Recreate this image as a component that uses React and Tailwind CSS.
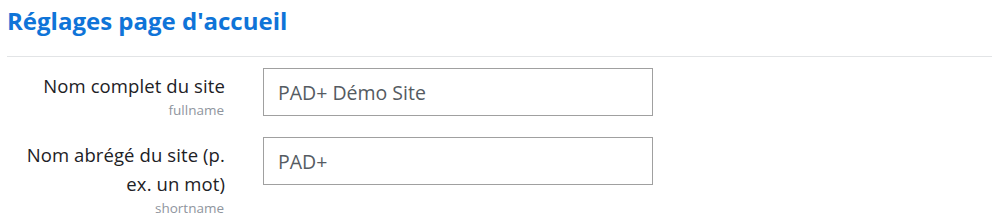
import React, { useState } from 'react'

const fields = [
  { label: "Nom complet du site", name: "fullname" },
  { label: "Nom abrégé du site (p. ex. un mot)", name: "shortname" },
]

const App = () => {
  const [values, setValues] = useState({
    fullname: "PAD+ Démo Site",
    shortname: "PAD+",
  })

  const handleChange = (e) => {
    const { name, value } = e.target
    setValues((prev) => ({ ...prev, [name]: value }))
  }

  return (
    <div className="bg-white w-[1000px] h-[217px] overflow-hidden px-[7px] pt-[5px]" style={{ fontFamily: '"Open Sans", "Noto Sans", sans-serif' }}>
      <h3 className="text-[24px] font-bold text-[#0f74d8] leading-[32px]">Réglages page d'accueil</h3>
      <div className="border-t border-[#e2e4e6] mt-[19px] w-[985px]" />
      <div className="mt-[11px] space-y-[19px]">
        {fields.map((f) => (
          <div key={f.name} className="flex items-start">
            <div className="w-[218px] text-right text-[#1d2125]">
              <div className="text-[18.5px] leading-[29px] pt-[3px] tracking-[0.1px]">{f.label}</div>
              <div className="text-[13.5px] text-[#8f959e] leading-[16px] mt-[2px] pr-[1px]">{f.name}</div>
            </div>
            <input
              type="text"
              name={f.name}
              value={values[f.name]}
              onChange={handleChange}
              className="ml-[38px] w-[390px] h-[48px] border border-[#a0a0a0] px-[14px] text-[19.5px] text-[#555b62] outline-none"
            />
          </div>
        ))}
      </div>
    </div>
  )
}

export default App
